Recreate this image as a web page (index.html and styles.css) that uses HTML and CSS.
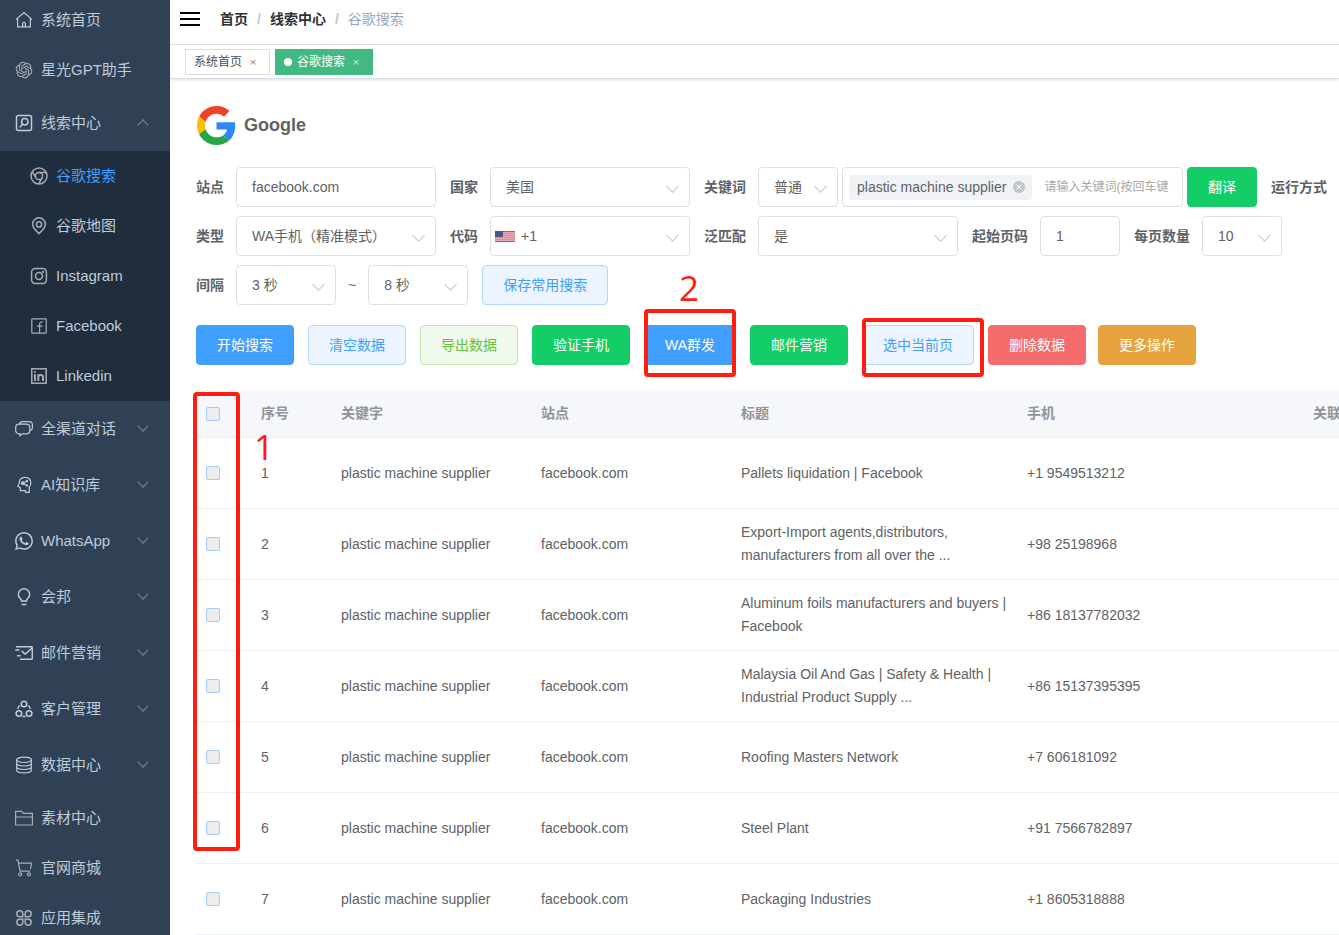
FILE: index.html
```html
<!DOCTYPE html>
<html lang="zh-CN">
<head>
<meta charset="utf-8">
<meta name="viewport" content="width=device-width, initial-scale=1">
<title>谷歌搜索</title>
<link rel="stylesheet" href="styles.css">
</head>
<body>
<div class="app">
  <nav class="sidebar">
    <ul class="menu">
      <li><a class="menu-item" href="#"><svg class="icon" viewBox="0 0 18 18"><path d="M.9 8.6 9 1.5l8.100 7.100M2.600 7.400v8.500h12.800V7.400M7.600 15.900v-3.200a1.400 1.400 0 0 1 2.800 0v3.200"/></svg><span>系统首页</span></a></li>
      <li><a class="menu-item dim" href="#"><svg class="icon solid" viewBox="-1 -1 26 26"><path d="M22.2819 9.8211a5.9847 5.9847 0 0 0-.5157-4.9108 6.0462 6.0462 0 0 0-6.5098-2.9A6.0651 6.0651 0 0 0 4.9807 4.1818a5.9847 5.9847 0 0 0-3.9977 2.9 6.0462 6.0462 0 0 0 .7427 7.0966 5.98 5.98 0 0 0 .511 4.9107 6.051 6.051 0 0 0 6.5146 2.9001A5.9847 5.9847 0 0 0 13.2599 24a6.0557 6.0557 0 0 0 5.7718-4.2058 5.9894 5.9894 0 0 0 3.9977-2.9001 6.0557 6.0557 0 0 0-.7475-7.0729zm-9.022 12.6081a4.4755 4.4755 0 0 1-2.8764-1.0408l.1419-.0804 4.7783-2.7582a.7948.7948 0 0 0 .3927-.6813v-6.7369l2.02 1.1686a.071.071 0 0 1 .038.052v5.5826a4.504 4.504 0 0 1-4.4945 4.4944zm-9.6607-4.1254a4.4708 4.4708 0 0 1-.5346-3.0137l.142.0852 4.783 2.7582a.7712.7712 0 0 0 .7806 0l5.8428-3.3685v2.3324a.0804.0804 0 0 1-.0332.0615L9.74 19.9502a4.4992 4.4992 0 0 1-6.1408-1.6464zM2.3408 7.8956a4.485 4.485 0 0 1 2.3655-1.9728V11.6a.7664.7664 0 0 0 .3879.6765l5.8144 3.3543-2.0201 1.1685a.0757.0757 0 0 1-.071 0l-4.8303-2.7865A4.504 4.504 0 0 1 2.3408 7.872zm16.5963 3.8558L13.1038 8.364 15.1192 7.2a.0757.0757 0 0 1 .071 0l4.8303 2.7913a4.4944 4.4944 0 0 1-.6765 8.1042v-5.6772a.79.79 0 0 0-.407-.667zm2.0107-3.0231l-.142-.0852-4.7735-2.7818a.7759.7759 0 0 0-.7854 0L9.409 9.2297V6.8974a.0662.0662 0 0 1 .0284-.0615l4.8303-2.7866a4.4992 4.4992 0 0 1 6.6802 4.66zM8.3065 12.863l-2.02-1.1638a.0804.0804 0 0 1-.038-.0567V6.0742a4.4992 4.4992 0 0 1 7.3757-3.4537l-.142.0805L8.704 5.459a.7948.7948 0 0 0-.3927.6813zm1.0976-2.3654l2.602-1.4998 2.6069 1.4998v2.9994l-2.5974 1.4997-2.6067-1.4997Z"/></svg><span>星光GPT助手</span></a></li>
      <li>
        <a class="menu-item tall open" href="#"><svg class="icon bold" viewBox="0 0 18 18"><rect x="1.500" y="1.500" width="15" height="15" rx="2"/><circle cx="9.800" cy="7.800" r="3.200"/><path d="M7.400 10.200 4.800 13.400"/></svg><span>线索中心</span></a>
        <ul class="submenu">
          <li><a class="menu-item dim active" href="#"><svg class="icon bold" viewBox="0 0 18 18"><circle cx="9" cy="9" r="8"/><circle cx="9" cy="9" r="3.600"/><path d="M9 5.400h7.200M5.900 10.800 2.200 4.600M12.100 10.800 8.600 17"/></svg><span>谷歌搜索</span></a></li>
          <li><a class="menu-item dim" href="#"><svg class="icon bold" viewBox="0 0 18 18"><path d="M9 16.600C5.400 13.400 2.600 10.600 2.600 7.200a6.400 6.400 0 0 1 12.800 0c0 3.400-2.800 6.200-6.400 9.400z"/><circle cx="9" cy="7.400" r="2.600"/></svg><span>谷歌地图</span></a></li>
          <li><a class="menu-item dim" href="#"><svg class="icon bold" viewBox="0 0 18 18"><rect x="1.600" y="1.600" width="14.800" height="14.800" rx="3.600"/><circle cx="9" cy="9" r="3.500"/><circle cx="13" cy="5" r=".4"/></svg><span>Instagram</span></a></li>
          <li><a class="menu-item dim" href="#"><svg class="icon" viewBox="0 0 18 18"><rect x="1.800" y="1.800" width="14.400" height="14.400" rx=".5"/><path d="M9.600 16V7.200c0-2 1.200-2.600 3.200-2.200M6.800 9.200h5.800"/></svg><span>Facebook</span></a></li>
          <li><a class="menu-item dim" href="#"><svg class="icon bold" viewBox="0 0 18 18"><rect x="1.800" y="1.800" width="14.400" height="14.400"/><path class="heavy" d="M5 7.300V14M5 4.200v1.600M8.300 14V7.300M8.300 10c0-2.600 4.700-3 4.700 0v4"/></svg><span>Linkedin</span></a></li>
        </ul>
      </li>
      <li><a class="menu-item tall" href="#"><svg class="icon" viewBox="0 0 18 18"><path d="M4.600 3.900C5 2.400 6.200 1.600 7.800 1.600h6.400c2 0 3.200 1.300 3.200 3.200v2.600c0 1.700-.8 2.700-2 3.100M4 4.200h7.500c2 0 3.300 1.300 3.300 3.200v3.100c0 2-1.300 3.300-3.300 3.300H7.300l-2.300 2v-2H4C2 13.800.7 12.500.7 10.500V7.400C.7 5.500 2 4.200 4 4.200z"/></svg><span>全渠道对话</span></a></li>
      <li><a class="menu-item tall" href="#"><svg class="icon" viewBox="0 0 18 18"><path d="M4.300 5.600C4.900 3 7 1.300 10 1.300c3.500 0 5.800 2.300 5.800 5.600 0 1.800-.6 2.900-1.500 4v5.500h-3.800v-1.700H5.300v-3L2.700 10l1.600-2.800z"/><path d="M8 7.200 12 5M8 7.200l3.800 2.200"/><circle class="fill" cx="7.800" cy="7.200" r="1.900"/><circle class="fill" cx="12" cy="5" r="1.200"/><circle class="fill" cx="11.800" cy="9.400" r="1.200"/></svg><span>AI知识库</span></a></li>
      <li><a class="menu-item tall" href="#"><svg class="icon solid" viewBox="0 0 24 24"><path d="M17.472 14.382c-.297-.149-1.758-.867-2.03-.967-.273-.099-.471-.148-.67.15-.197.297-.767.966-.94 1.164-.173.199-.347.223-.644.075-.297-.15-1.255-.463-2.39-1.475-.883-.788-1.48-1.761-1.653-2.059-.173-.297-.018-.458.13-.606.134-.133.298-.347.446-.52.149-.174.198-.298.298-.497.099-.198.05-.371-.025-.52-.075-.149-.669-1.612-.916-2.207-.242-.579-.487-.5-.669-.51-.173-.008-.371-.01-.57-.01-.198 0-.52.074-.792.372-.272.297-1.040 1.016-1.040 2.479 0 1.462 1.065 2.875 1.213 3.074.149.198 2.096 3.200 5.077 4.487.709.306 1.262.489 1.694.625.712.227 1.360.195 1.871.118.571-.085 1.758-.719 2.006-1.413.248-.694.248-1.289.173-1.413-.074-.124-.272-.198-.57-.347m-5.421 7.403h-.004a9.870 9.870 0 01-5.031-1.378l-.361-.214-3.741.982.998-3.648-.235-.374a9.860 9.860 0 01-1.510-5.260c.001-5.450 4.436-9.884 9.888-9.884 2.640 0 5.122 1.030 6.988 2.898a9.825 9.825 0 012.893 6.994c-.003 5.450-4.437 9.884-9.885 9.884m8.413-18.297A11.815 11.815 0 0012.050 0C5.495 0 .16 5.335.157 11.892c0 2.096.547 4.142 1.588 5.945L.057 24l6.305-1.654a11.882 11.882 0 005.683 1.448h.005c6.554 0 11.890-5.335 11.893-11.893a11.821 11.821 0 00-3.480-8.413z"/></svg><span>WhatsApp</span></a></li>
      <li><a class="menu-item tall" href="#"><svg class="icon bold" viewBox="0 0 18 18"><path d="M6.600 12.900c0-2.100-3.300-3-3.300-6.400a5.700 5.700 0 0 1 11.400 0c0 3.400-3.300 4.300-3.300 6.400zM6.600 16.600h4.800"/></svg><span>会邦</span></a></li>
      <li><a class="menu-item tall" href="#"><svg class="icon bold" viewBox="0 0 18 18"><path d="M1 2.800h15.200c.7 0 1.100.4 1.100 1.100v10.300c0 .7-.4 1.100-1.100 1.100H5M.2 5.900h4.200M2 11.800h3.600M6.600 7.200l3.600 2.900 6.600-5.900"/></svg><span>邮件营销</span></a></li>
      <li><a class="menu-item tall" href="#"><svg class="icon bold" viewBox="0 0 18 18"><circle cx="9" cy="4" r="2.800"/><circle cx="3.900" cy="13.500" r="2.800"/><circle cx="14.100" cy="13.500" r="2.800"/><path d="M4.800 5.500C3.700 6.400 3 7.500 2.700 8.900M13.200 5.500c1.100.9 1.800 2 2.100 3.400M7.400 16.300c1.100.3 2.100.3 3.200 0"/></svg><span>客户管理</span></a></li>
      <li><a class="menu-item tall" href="#"><svg class="icon" viewBox="0 0 18 18"><ellipse cx="9" cy="3.800" rx="7.300" ry="2.700"/><path d="M1.700 3.800v10.400c0 1.500 3.300 2.700 7.300 2.700s7.300-1.200 7.300-2.700V3.800M1.700 7.300C1.700 8.800 5 10 9 10s7.300-1.200 7.300-2.700M1.700 10.800c0 1.500 3.300 2.700 7.300 2.700s7.300-1.200 7.300-2.700"/></svg><span>数据中心</span></a></li>
      <li><a class="menu-item dim" href="#"><svg class="icon" viewBox="0 0 18 18"><path d="M.6 16V2.400h6l1.900 2h8.900V16zM.6 8h16.800"/></svg><span>素材中心</span></a></li>
      <li><a class="menu-item dim" href="#"><svg class="icon" viewBox="0 0 18 18"><path d="M1 1.200h2l2 11h10.200M4 4.200h12.500l-1 5.800"/><circle cx="5.200" cy="15.300" r="1.500"/><circle cx="14" cy="15.300" r="1.500"/></svg><span>官网商城</span></a></li>
      <li><a class="menu-item dim" href="#"><svg class="icon bold" viewBox="0 0 18 18"><path d="M7.800 7.800H4.700A3 3 0 1 1 7.800 4.700zM10.200 7.800V4.700a3 3 0 1 1 3.100 3.100zM7.800 10.200v3.100a3 3 0 1 1-3.100-3.100zM10.200 10.200h3.100a3 3 0 1 1-3.100 3.100z"/></svg><span>应用集成</span></a></li>
    </ul>
  </nav>

  <div class="main">
    <header class="navbar">
      <button class="hamburger" type="button" aria-label="菜单"><i></i><i></i><i></i></button>
      <nav class="breadcrumb"><a href="#">首页</a><b>/</b><a href="#">线索中心</a><b>/</b><span>谷歌搜索</span></nav>
    </header>
    <div class="tabs">
      <a class="tab" href="#">系统首页<span class="x">×</span></a>
      <a class="tab current" href="#">谷歌搜索<span class="x">×</span></a>
    </div>

    <main class="content">
      <div class="brand">
        <svg class="logo" viewBox="0 0 48 48"><path fill="#ef4329" d="M24 9.500c3.540 0 6.710 1.220 9.210 3.600l6.850-6.850C35.900 2.380 30.470 0 24 0 14.620 0 6.510 5.380 2.560 13.220l7.980 6.190C12.430 13.720 17.740 9.500 24 9.500z"/><path fill="#3086ff" d="M46.980 24.550c0-1.570-.15-3.090-.38-4.550H24v9.020h12.940c-.58 2.960-2.260 5.480-4.780 7.180l7.730 6c4.510-4.180 7.090-10.360 7.090-17.650z"/><path fill="#ffbd00" d="M10.530 28.590c-.48-1.450-.76-2.990-.76-4.590s.27-3.140.76-4.590l-7.980-6.190C.92 16.460 0 20.120 0 24c0 3.880.92 7.540 2.560 10.780z"/><path fill="#26a746" d="M24 48c6.480 0 11.930-2.130 15.890-5.810l-7.730-6c-2.150 1.450-4.920 2.300-8.160 2.300-6.260 0-11.570-4.220-13.470-9.910l-7.980 6.190C6.510 42.620 14.620 48 24 48z"/></svg>
        <h1>Google</h1>
      </div>

      <form class="search">
        <div class="row">
          <div class="field"><label for="site">站点</label><input class="box" id="site" type="text" value="facebook.com"></div>
          <div class="field"><label for="country">国家</label><div class="pick"><select class="box" id="country"><option>美国</option></select></div></div>
          <div class="field"><label for="kind">关键词</label>
            <div class="joined">
              <div class="pick small"><select class="box" id="kind"><option>普通</option></select></div>
              <div class="box keywords"><span class="chip">plastic machine supplier<button type="button" aria-label="移除"><svg viewBox="0 0 12 12"><circle cx="6" cy="6" r="6"/><path d="m3.500 3.500 5 5m0-5-5 5"/></svg></button></span><input type="text" placeholder="请输入关键词(按回车键" aria-label="关键词"></div>
              <button class="btn green slim" type="button">翻译</button>
            </div>
          </div>
          <div class="field"><span class="caption">运行方式</span></div>
        </div>
        <div class="row">
          <div class="field"><label for="type">类型</label><div class="pick"><select class="box" id="type"><option>WA手机（精准模式）</option></select></div></div>
          <div class="field"><label for="code">代码</label><div class="pick flagged"><select class="box" id="code"><option>+1</option></select>
            <svg class="flag" viewBox="0 0 20 11"><path fill="#e9a9b0" d="M0 0h20v11H0z"/><path stroke="#c9505f" d="M0 .5h20M0 10.500h20"/><path stroke="#dc8c96" d="M0 2.500h20M0 4.500h20M0 6.500h20M0 8.500h20"/><path fill="#4f5486" d="M0 0h8v6H0z"/></svg></div></div>
          <div class="field"><label for="broad">泛匹配</label><div class="pick"><select class="box" id="broad"><option>是</option></select></div></div>
          <div class="field"><label for="start">起始页码</label><input class="box small" id="start" type="text" value="1"></div>
          <div class="field"><label for="size">每页数量</label><div class="pick small"><select class="box" id="size"><option>10</option></select></div></div>
        </div>
        <div class="row">
          <div class="field"><label for="from">间隔</label><div class="pick medium"><select class="box" id="from"><option>3 秒</option></select></div><span>~</span><div class="pick medium"><select class="box" id="to" aria-label="间隔"><option>8 秒</option></select></div></div>
          <button class="btn pale" type="button">保存常用搜索</button>
        </div>
      </form>

      <div class="actions">
        <button class="btn blue" type="button">开始搜索</button>
        <button class="btn pale" type="button">清空数据</button>
        <button class="btn mint" type="button">导出数据</button>
        <button class="btn green" type="button">验证手机</button>
        <div class="marked"><button class="btn blue" type="button">WA群发</button><div class="frame frame-send"></div><span class="step step-two">2</span></div>
        <button class="btn green" type="button">邮件营销</button>
        <div class="marked"><button class="btn pale" type="button">选中当前页</button><div class="frame frame-select"></div></div>
        <div class="pair">
          <button class="btn red" type="button">删除数据</button>
          <button class="btn amber" type="button">更多操作</button>
        </div>
      </div>

      <div class="results">
        <table>
          <colgroup><col class="c-check"><col class="c-no"><col class="c-mid"><col class="c-mid"><col class="c-wide"><col class="c-wide"><col class="c-wide"></colgroup>
          <thead><tr><th><input type="checkbox" aria-label="全选"></th><th>序号</th><th>关键字</th><th>站点</th><th>标题</th><th>手机</th><th>关联</th></tr></thead>
          <tbody>
            <tr><td><input type="checkbox" aria-label="1"></td><td>1</td><td>plastic machine supplier</td><td>facebook.com</td><td>Pallets liquidation | Facebook</td><td>+1 9549513212</td><td></td></tr>
            <tr><td><input type="checkbox" aria-label="2"></td><td>2</td><td>plastic machine supplier</td><td>facebook.com</td><td>Export-Import agents,distributors, manufacturers from all over the ...</td><td>+98 25198968</td><td></td></tr>
            <tr><td><input type="checkbox" aria-label="3"></td><td>3</td><td>plastic machine supplier</td><td>facebook.com</td><td>Aluminum foils manufacturers and buyers | Facebook</td><td>+86 18137782032</td><td></td></tr>
            <tr><td><input type="checkbox" aria-label="4"></td><td>4</td><td>plastic machine supplier</td><td>facebook.com</td><td>Malaysia Oil And Gas | Safety &amp; Health | Industrial Product Supply ...</td><td>+86 15137395395</td><td></td></tr>
            <tr><td><input type="checkbox" aria-label="5"></td><td>5</td><td>plastic machine supplier</td><td>facebook.com</td><td>Roofing Masters Network</td><td>+7 606181092</td><td></td></tr>
            <tr><td><input type="checkbox" aria-label="6"></td><td>6</td><td>plastic machine supplier</td><td>facebook.com</td><td>Steel Plant</td><td>+91 7566782897</td><td></td></tr>
            <tr><td><input type="checkbox" aria-label="7"></td><td>7</td><td>plastic machine supplier</td><td>facebook.com</td><td>Packaging Industries</td><td>+1 8605318888</td><td></td></tr>
          </tbody>
        </table>
        <div class="frame frame-checks"></div>
        <span class="step step-one">1</span>
      </div>
    </main>
  </div>
</div>
</body>
</html>
```

FILE: styles.css
```css
* { box-sizing: border-box; }

body {
  margin: 0;
  font: 14px/20px "Liberation Sans", "Noto Sans CJK SC", sans-serif;
  color: #606266;
  background: #fff;
}

a { color: inherit; text-decoration: none; }
ul { list-style: none; margin: 0; padding: 0; }
button, input, select { font: inherit; color: inherit; }

.app { display: flex; height: 100vh; overflow: hidden; }

/* Sidebar */
.sidebar { flex: none; width: 170px; background: #304156; overflow: hidden; }
.menu { margin-top: -5px; }
.menu-item {
  display: flex;
  align-items: center;
  gap: 8px;
  height: 50px;
  padding: 0 20px 0 15px;
  font-size: 15px;
  color: #bfcbd9;
}
.menu-item.tall { height: 56px; }
.submenu { background: #1f2d3d; }
.submenu .menu-item { padding-left: 30px; }
.menu-item.active span { color: #409eff; }
.menu-item.tall::after {
  content: "";
  width: 7px;
  height: 7px;
  margin: 0 3px 6px auto;
  border: solid #76849a;
  border-width: 0 1px 1px 0;
  transform: rotate(45deg);
}
.menu-item.tall.open::after { margin-bottom: -3px; transform: rotate(225deg); }

.icon {
  flex: none;
  width: 18px;
  height: 18px;
  fill: none;
  stroke: currentColor;
  stroke-width: 1.2;
}
.icon.bold { stroke-width: 1.5; }
.icon.solid { fill: currentColor; stroke: none; }
.icon .heavy { stroke-width: 2; }
.icon .fill { fill: currentColor; stroke: none; }
.dim .icon { color: #a9adb3; }

/* Top bars */
.main { flex: 1; min-width: 0; overflow: hidden; }
.navbar {
  display: flex;
  align-items: center;
  gap: 20px;
  height: 45px;
  padding: 0 10px 6px;
  border-bottom: 1px solid #e2e4e8;
}
.hamburger {
  display: grid;
  gap: 4px;
  width: 20px;
  padding: 0;
  border: 0;
  background: none;
}
.hamburger i { height: 2px; background: #000; }
.breadcrumb { display: flex; color: #97a8be; }
.breadcrumb a { font-weight: 700; color: #303133; }
.breadcrumb b { margin: 0 9px; color: #c0c4cc; }

.tabs {
  display: flex;
  gap: 5px;
  height: 34px;
  padding: 4px 15px;
  border-bottom: 1px solid #d8dce5;
  box-shadow: 0 1px 3px rgba(0, 0, 0, .12);
}
.tab {
  display: flex;
  align-items: center;
  height: 26px;
  padding: 0 8px;
  border: 1px solid #d8dce5;
  font-size: 12px;
  color: #495060;
}
.tab.current { border-color: #42b983; background: #42b983; color: #fff; }
.tab.current::before {
  content: "";
  width: 8px;
  height: 8px;
  margin-right: 5px;
  border-radius: 50%;
  background: #fff;
}
.tab .x { width: 16px; margin-left: 3px; text-align: center; font-size: 11px; opacity: .7; }

/* Content */
.content { padding: 27px 0 0 27px; }
.brand { display: flex; align-items: center; gap: 8px; height: 38px; }
.brand h1 { margin: 0; font-size: 18px; line-height: 24px; }
.logo { width: 39px; height: 39px; }

.search, .actions, .results { margin-left: -1px; }
.search { display: grid; gap: 9px; margin-top: 23px; }
.row { display: flex; gap: 14px; white-space: nowrap; }
.field { display: flex; flex: none; align-items: center; gap: 12px; }
.field label, .caption { font-weight: 700; }
.joined { display: flex; gap: 4px; }

.box {
  width: 200px;
  height: 40px;
  padding: 0 15px;
  border: 1px solid #dcdfe6;
  border-radius: 4px;
  background: #fff;
  outline: 0;
}
.box.small { width: 80px; }
.pick { position: relative; width: 200px; }
.pick.small { width: 80px; }
.pick.medium { width: 100px; }
.pick .box { width: 100%; appearance: none; }
.pick::after {
  content: "";
  position: absolute;
  top: 15px;
  right: 13px;
  width: 8px;
  height: 8px;
  border: solid #c0c4cc;
  border-width: 0 1px 1px 0;
  transform: rotate(45deg);
  pointer-events: none;
}
.flagged .box { padding-left: 30px; }
.flag { position: absolute; left: 5px; top: 15px; width: 20px; height: 11px; }

.keywords { display: flex; align-items: center; width: 341px; padding: 0 12px 0 6px; }
.chip {
  display: flex;
  flex: none;
  align-items: center;
  gap: 7px;
  height: 25px;
  padding: 0 7px 0 8px;
  border-radius: 4px;
  background: #f0f2f5;
}
.chip button { display: flex; padding: 0; border: 0; background: none; }
.chip svg { width: 12px; height: 12px; fill: #c0c4cc; stroke: #fff; }
.chip circle { stroke: none; }
.keywords input {
  flex: 1;
  min-width: 0;
  margin-left: 12px;
  padding: 0;
  border: 0;
  outline: 0;
  font-size: 12px;
}
.keywords input::placeholder { color: #a8a8a8; opacity: 1; }

.btn {
  flex: none;
  height: 40px;
  padding: 0 20px;
  border: 1px solid;
  border-radius: 4px;
  color: #fff;
  white-space: nowrap;
}
.blue { background: #409eff; border-color: #409eff; }
.green { background: #13ce66; border-color: #13ce66; }
.red { background: #f56c6c; border-color: #f56c6c; }
.amber { background: #e6a23c; border-color: #e6a23c; }
.pale { background: #ecf5ff; border-color: #b3d8ff; color: #409eff; }
.mint { background: #f0f9eb; border-color: #c2e7b0; color: #67c23a; }

.actions { display: flex; gap: 14px; margin-top: 20px; }
.pair { display: flex; gap: 12px; }
.marked { position: relative; flex: none; }

/* Table */
.results { position: relative; margin-top: 25px; }
table { width: 1393px; table-layout: fixed; border-collapse: separate; border-spacing: 0; }
.c-check { width: 55px; }
.c-no { width: 80px; }
.c-mid { width: 200px; }
.c-wide { width: 286px; }
th, td { padding: 0 10px; text-align: left; line-height: 23px; border-bottom: 1px solid #ebeef5; }
th { height: 48px; background: #f5f7fa; color: #909399; }
td { height: 71px; }
td input, th input {
  display: block;
  appearance: none;
  width: 14px;
  height: 14px;
  margin: 0;
  border: 1px solid #a3cdf8;
  border-radius: 2px;
  background: #ededed;
}

/* Annotations laid over the page */
.frame {
  position: absolute;
  z-index: 2;
  border: 4px solid #ff1c10;
  border-radius: 4px;
  pointer-events: none;
}
.frame-send { inset: -16px 0 -12px; }
.frame-select { inset: -7px -10px -12px 0; }
.frame-checks { left: -3px; top: 2px; width: 47px; height: 459px; }
.step {
  position: absolute;
  z-index: 2;
  font: 400 35px/36px "Open Sans", "Noto Sans", sans-serif;
  color: #ff1c10;
}
.step-one { left: 58px; top: 39px; }
.step-two { left: 35px; top: -55px; }
```
